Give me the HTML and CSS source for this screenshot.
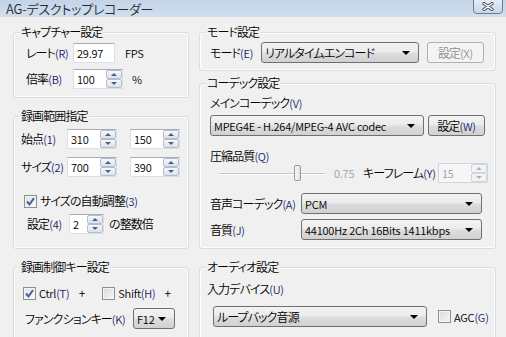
FILE: index.html
```html
<!DOCTYPE html>
<html lang="ja">
<head>
    <meta charset="UTF-8">
    <title>AG-デスクトップレコーダー</title>
    <link rel="stylesheet" href="styles.css">
</head>
<body>
    <div class="titlebar">
        <span class="title">AG-デスクトップレコーダー</span>
        <button class="close-btn">
            <svg width="12" height="9" viewBox="0 0 12 9">
                <path d="M2 1.5 L10 7.5 M10 1.5 L2 7.5" stroke="#3f4d60" stroke-width="3.2" stroke-linecap="round"/>
                <path d="M2 1.5 L10 7.5 M10 1.5 L2 7.5" stroke="#ffffff" stroke-width="1.5" stroke-linecap="round"/>
            </svg>
        </button>
    </div>

    <div class="client">
        <!-- 左列 -->
        <div class="col">
            <section class="group capture">
                <h2 class="group-title">キャプチャー設定</h2>
                <div class="row cap-row1">
                    <span class="lbl cap-lbl">レート<span class="k">(R)</span></span>
                    <div class="edit rate-edit lat">29.97</div>
                    <span class="unit fps lat">FPS</span>
                </div>
                <div class="row cap-row2">
                    <span class="lbl cap-lbl">倍率<span class="k">(B)</span></span>
                    <div class="edit w50">
                        <span class="val lat">100</span>
                        <span class="spin"><i class="up"></i><i class="down"></i></span>
                    </div>
                    <span class="unit pct lat">%</span>
                </div>
            </section>

            <section class="group range">
                <h2 class="group-title">録画範囲指定</h2>
                <div class="row pos-row1">
                    <span class="lbl pos-lbl">始点<span class="k">(1)</span></span>
                    <div class="edit w50">
                        <span class="val lat">310</span>
                        <span class="spin"><i class="up"></i><i class="down"></i></span>
                    </div>
                    <div class="edit w50 second">
                        <span class="val lat">150</span>
                        <span class="spin"><i class="up"></i><i class="down"></i></span>
                    </div>
                </div>
                <div class="row pos-row2">
                    <span class="lbl pos-lbl">サイズ<span class="k">(2)</span></span>
                    <div class="edit w50">
                        <span class="val lat">700</span>
                        <span class="spin"><i class="up"></i><i class="down"></i></span>
                    </div>
                    <div class="edit w50 second">
                        <span class="val lat">390</span>
                        <span class="spin"><i class="up"></i><i class="down"></i></span>
                    </div>
                </div>
                <div class="row auto-row">
                    <span class="check on">
                        <svg width="11" height="11" viewBox="0 0 11 11"><path d="M2 5.5 L4.5 8.3 L9 2.2" fill="none" stroke="#4c5f9e" stroke-width="2"/></svg>
                    </span>
                    <span class="check-lbl">サイズの自動調整<span class="k">(3)</span></span>
                </div>
                <div class="row mult-row">
                    <span class="lbl mult-lbl">設定<span class="k">(4)</span></span>
                    <div class="edit w35">
                        <span class="val lat">2</span>
                        <span class="spin"><i class="up"></i><i class="down"></i></span>
                    </div>
                    <span class="unit mult-unit">の整数倍</span>
                </div>
            </section>

            <section class="group hotkey">
                <h2 class="group-title">録画制御キー設定</h2>
                <div class="row key-row">
                    <span class="key-item ctrl">
                        <span class="check on">
                            <svg width="11" height="11" viewBox="0 0 11 11"><path d="M2 5.5 L4.5 8.3 L9 2.2" fill="none" stroke="#4c5f9e" stroke-width="2"/></svg>
                        </span>
                        <span class="check-lbl lat">Ctrl<span class="k">(T)</span></span>
                    </span>
                    <span class="plus">+</span>
                    <span class="key-item shift">
                        <span class="check"></span>
                        <span class="check-lbl lat">Shift<span class="k">(H)</span></span>
                    </span>
                    <span class="plus">+</span>
                </div>
                <div class="row func-row">
                    <span class="lbl func-lbl">ファンクションキー<span class="k">(K)</span></span>
                    <div class="combo func-combo"><span class="combo-text lat">F12</span><i class="arrow"></i></div>
                </div>
            </section>
        </div>

        <!-- 右列 -->
        <div class="col">
            <section class="group mode">
                <h2 class="group-title">モード設定</h2>
                <div class="row mode-row">
                    <span class="lbl mode-lbl">モード<span class="k">(E)</span></span>
                    <div class="combo mode-combo"><span class="combo-text">リアルタイムエンコード</span><i class="arrow"></i></div>
                    <button class="btn disabled">設定<span class="lat">(X)</span></button>
                </div>
            </section>

            <section class="group codec">
                <h2 class="group-title">コーデック設定</h2>
                <div class="row text-row main-lbl">メインコーデック<span class="k">(V)</span></div>
                <div class="row codec-row">
                    <div class="combo codec-combo"><span class="combo-text lat">MPEG4E - H.264/MPEG-4 AVC codec</span><i class="arrow"></i></div>
                    <button class="btn codec-btn">設定<span class="k">(W)</span></button>
                </div>
                <div class="row text-row quality-lbl">圧縮品質<span class="k">(Q)</span></div>
                <div class="row slider-row">
                    <div class="slider"><span class="thumb"></span></div>
                    <span class="q-value lat">0.75</span>
                    <span class="kf-lbl">キーフレーム<span class="k">(Y)</span></span>
                    <div class="edit w50 disabled">
                        <span class="val lat">15</span>
                        <span class="spin"><i class="up"></i><i class="down"></i></span>
                    </div>
                </div>
                <div class="row audio-codec-row">
                    <span class="lbl ac-lbl">音声コーデック<span class="k">(A)</span></span>
                    <div class="combo ac-combo"><span class="combo-text lat">PCM</span><i class="arrow"></i></div>
                </div>
                <div class="row audio-fmt-row">
                    <span class="lbl ac-lbl">音質<span class="k">(J)</span></span>
                    <div class="combo ac-combo"><span class="combo-text lat">44100Hz 2Ch 16Bits 1411kbps</span><i class="arrow"></i></div>
                </div>
            </section>

            <section class="group audio">
                <h2 class="group-title">オーディオ設定</h2>
                <div class="row text-row device-lbl">入力デバイス<span class="k">(U)</span></div>
                <div class="row device-row">
                    <div class="combo device-combo"><span class="combo-text">ループバック音源</span><i class="arrow"></i></div>
                    <span class="check agc"></span>
                    <span class="check-lbl lat">AGC<span class="k">(G)</span></span>
                </div>
            </section>
        </div>
    </div>
</body>
</html>
```

FILE: styles.css
```css
html, body {
    margin: 0;
    padding: 0;
}

body {
    width: 506px;
    height: 337px;
    overflow: hidden;
    background: #f0f0f0;
    font-family: "Noto Sans CJK JP", "Noto Sans", sans-serif;
    font-feature-settings: "palt";
    font-size: 12px;
    font-weight: 350;
    letter-spacing: -0.9px;
    color: #000;
}

/* 英数字は少し小さく、詰めすぎない */
.lat,
.k {
    font-size: 11px;
    letter-spacing: -0.2px;
}

.k {
    color: #16236a;
}

/* タイトルバー */
.titlebar {
    height: 17px;
    display: flex;
    justify-content: space-between;
    align-items: flex-start;
    background: linear-gradient(#c3d4e8, #d1deed);
}

.title {
    padding-left: 6px;
    font-size: 13px;
    line-height: 17px;
    color: #262a30;
    letter-spacing: -0.2px;
}

.close-btn {
    width: 30px;
    height: 15px;
    margin: -1px 3px 0 0;
    padding: 0;
    border: 1px solid #6c7c93;
    border-radius: 0 0 4px 4px;
    background: linear-gradient(#e4ecf5, #c8d6e7);
    display: flex;
    align-items: center;
    justify-content: center;
}

/* クライアント領域 */
.client {
    display: grid;
    grid-template-columns: 176px 297px;
    column-gap: 10px;
    padding: 15px 0 0 13px;
}

.col {
    display: flex;
    flex-direction: column;
}

.group {
    box-sizing: border-box;
    border: 1px solid #d5dfe5;
    border-radius: 3px;
    box-shadow: inset 0 0 0 1px #fbfcfd;
}

.group-title {
    margin: -8px 0 0 6px;
    padding: 0 1px;
    width: fit-content;
    height: 14px;
    line-height: 14px;
    font-size: 12px;
    font-weight: 350;
    background: #f0f0f0;
}

.capture { height: 66px; }
.range { height: 133px; margin-top: 18px; }
.hotkey { height: 90px; margin-top: 18px; }
.mode { height: 39px; }
.codec { height: 166px; margin-top: 12px; }
.audio { height: 90px; margin-top: 18px; }

.row {
    display: flex;
    align-items: center;
    height: 20px;
    line-height: 14px;
    white-space: nowrap;
}

.text-row {
    height: 14px;
}

.lbl {
    flex: none;
}

/* テキストボックス */
.edit {
    box-sizing: border-box;
    height: 20px;
    display: flex;
    align-items: stretch;
    background: #fff;
    border: 1px solid #dbdfe6;
    border-top-color: #abadb3;
    padding-left: 3px;
    flex: none;
}

.edit .val {
    flex: 1;
    display: flex;
    align-items: center;
}

.rate-edit {
    width: 42px;
    align-items: center;
}

.w50 { width: 50px; }
.w35 { width: 35px; }

.spin {
    width: 16px;
    display: flex;
    flex-direction: column;
}

.spin i {
    flex: 1;
    box-sizing: border-box;
    border: 1px solid #b4bdcb;
    border-radius: 2px;
    background: linear-gradient(#f5f7fa, #dce2eb);
    display: flex;
    align-items: center;
    justify-content: center;
}

.spin i::after {
    content: "";
    border-left: 3px solid transparent;
    border-right: 3px solid transparent;
}

.spin .up::after {
    border-bottom: 3px solid #4b5f86;
}

.spin .down::after {
    border-top: 3px solid #4b5f86;
}

.edit.disabled {
    background: #f6f6f6;
    border-color: #d2d6dc;
    color: #9d9d9d;
}

.edit.disabled .spin i {
    border-color: #d2d6dc;
    background: #f1f3f5;
}

.edit.disabled .spin .up::after { border-bottom-color: #aab4c4; }
.edit.disabled .spin .down::after { border-top-color: #aab4c4; }

/* コンボボックス・ボタン */
.combo,
.btn {
    box-sizing: border-box;
    height: 21px;
    border: 1px solid #707070;
    border-radius: 3px;
    background: linear-gradient(#f3f3f3 0%, #ebebeb 48%, #dddddd 52%, #d1d1d1 100%);
    flex: none;
}

.combo {
    display: flex;
    align-items: center;
    padding: 0 8px 0 3px;
}

.combo-text {
    flex: 1;
}

.arrow {
    border-left: 4px solid transparent;
    border-right: 4px solid transparent;
    border-top: 4px solid #000;
}

.btn {
    font-family: inherit;
    font-feature-settings: "palt";
    font-size: 12px;
    font-weight: 350;
    letter-spacing: -0.9px;
    padding: 0;
    color: #000;
}

.btn.disabled {
    border-color: #adb2b5;
    background: #f4f4f4;
    color: #8d8d8d;
}

/* チェックボックス */
.check {
    box-sizing: border-box;
    width: 13px;
    height: 13px;
    border: 1px solid #8e8f8f;
    background: linear-gradient(135deg, #d8d9da, #f7f7f7);
    box-shadow: inset 0 0 0 1px #f4f4f4;
    display: flex;
    align-items: center;
    justify-content: center;
    flex: none;
}

.check.on {
    background: linear-gradient(135deg, #e2e3e6, #fbfbfb);
}

.check-lbl {
    margin-left: 3px;
}

/* キャプチャー設定 */
.cap-row1 { margin: 4px 0 0 12px; }
.cap-row2 { margin: 6px 0 0 12px; }
.cap-lbl { width: 47px; }
.fps { margin-left: 10px; }
.pct { margin-left: 9px; }

/* 録画範囲指定 */
.pos-row1 { margin: 6px 0 0 7px; }
.pos-row2 { margin: 8px 0 0 7px; }
.pos-lbl { width: 46px; }
.edit.second { margin-left: 13px; }
.auto-row { margin: 14px 0 0 10px; }
.mult-row { margin: 3px 0 0 13px; }
.mult-lbl { width: 42px; }
.mult-unit { margin-left: 5px; }

/* 録画制御キー設定 */
.key-row { margin: 9px 0 0 9px; }
.key-item { display: flex; align-items: center; }
.key-item.ctrl { width: 59px; }
.key-item.shift { width: 66px; }
.plus { width: 25px; }
.func-row { margin: 5px 0 0 11px; height: 21px; }
.func-lbl { width: 108px; }
.func-combo { width: 42px; }

/* モード設定 */
.mode-row { margin: 3px 0 0 10px; height: 21px; }
.mode-lbl { width: 51px; }
.mode-combo { width: 158px; }
.mode-row .btn { width: 57px; margin-left: 8px; }

/* コーデック設定 */
.main-lbl { margin: 6px 0 0 10px; }
.codec-row { margin: 5px 0 0 10px; height: 21px; }
.codec-combo { width: 214px; }
.codec-btn { width: 57px; margin-left: 4px; }
.quality-lbl { margin: 13px 0 0 10px; }
.slider-row { margin-left: 10px; }

.slider {
    width: 106px;
    height: 20px;
    margin-left: 9px;
    display: flex;
    align-items: center;
    background: linear-gradient(#c6c6c6, #c6c6c6) left 50% / 100% 1px no-repeat,
                linear-gradient(#ffffff, #ffffff) left calc(50% + 1px) / 100% 1px no-repeat;
}

.thumb {
    box-sizing: border-box;
    width: 7px;
    height: 16px;
    margin-left: 75px;
    border: 1px solid #9a9a9a;
    border-radius: 2px;
    background: linear-gradient(90deg, #f6f6f6, #e2e2e2);
}

.q-value {
    width: 29px;
    margin-left: 9px;
    color: #a3a3a3;
}

.kf-lbl { width: 75px; }

.audio-codec-row { margin: 10px 0 0 10px; height: 21px; }
.audio-fmt-row { margin: 5px 0 0 10px; height: 21px; }
.ac-lbl { width: 91px; }
.ac-combo { width: 181px; }

/* オーディオ設定 */
.device-lbl { margin: 8px 0 0 7px; }
.device-row { margin: 10px 0 0 13px; height: 21px; }
.device-combo { width: 214px; }
.agc { margin-left: 11px; }
```
